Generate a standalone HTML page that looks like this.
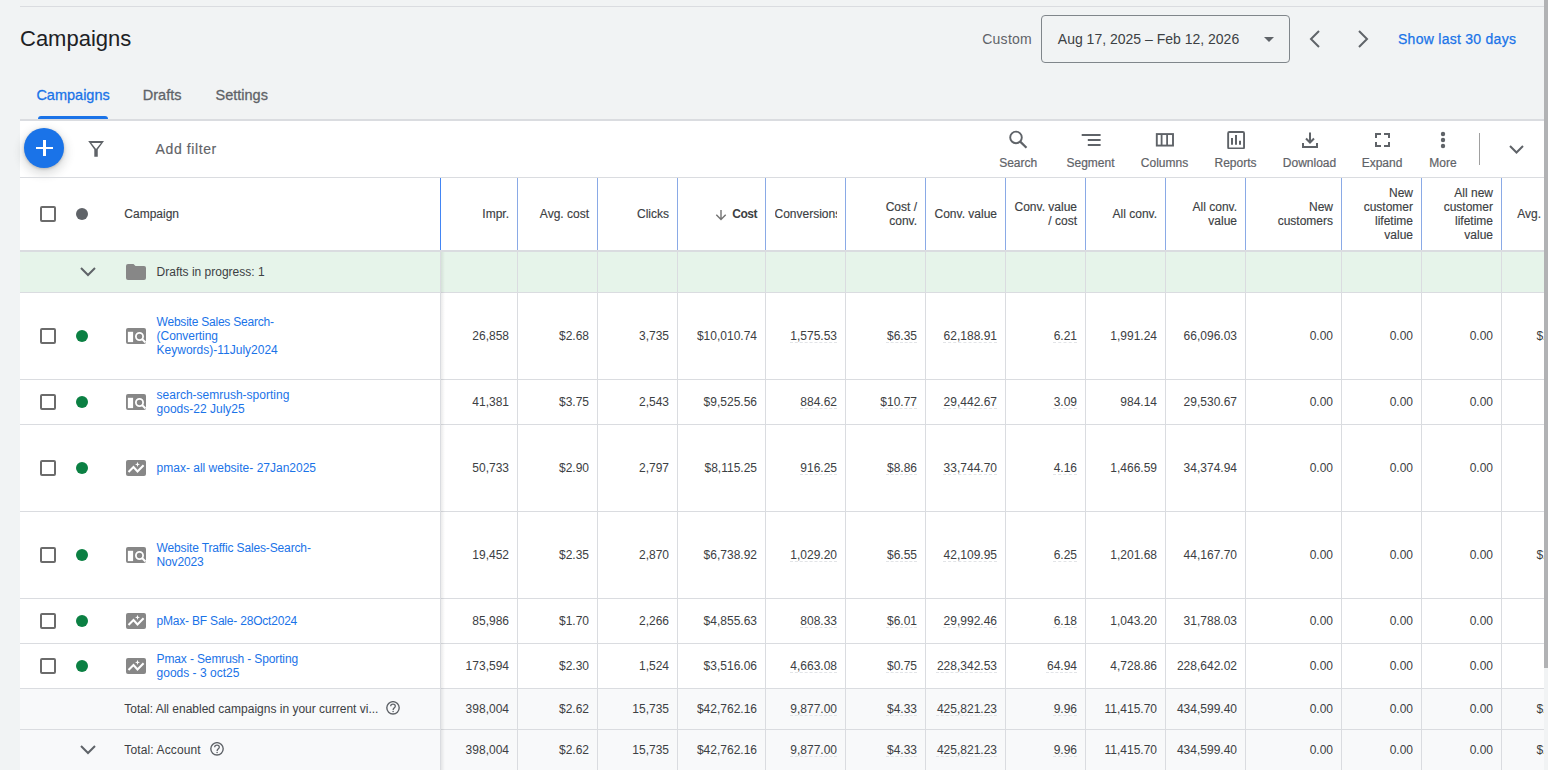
<!DOCTYPE html>
<html><head><meta charset="utf-8"><style>
html,body{margin:0;padding:0;}
body{width:1548px;height:770px;overflow:hidden;position:relative;background:#f1f3f4;font-family:"Liberation Sans", sans-serif;}
.t{position:absolute;white-space:nowrap;}
.r{position:absolute;}
</style></head><body>
<div class="r" style="left:20px;top:6px;width:1524px;height:1px;background:#dadce0"></div>
<div class="t" style="left:20.00px;top:28.18px;font-size:22px;line-height:22px;color:#202124;font-weight:normal;">Campaigns</div>
<div class="t" style="left:982.20px;top:31.75px;font-size:14px;line-height:14px;color:#5f6368;font-weight:normal;letter-spacing:0.27px">Custom</div>
<div class="r" style="left:1041px;top:15px;width:249px;height:48px;border:1px solid #80868b;border-radius:4px;box-sizing:border-box"></div>
<div class="t" style="left:1057.80px;top:31.75px;font-size:14px;line-height:14px;color:#3c4043;font-weight:normal;">Aug 17, 2025 – Feb 12, 2026</div>
<svg class="r" style="left:1264px;top:37px" width="10" height="5" viewBox="0 0 10 5"><path d="M0 0L10 0L5 5Z" fill="#5f6368"/></svg>
<svg class="r" style="left:1305px;top:29px" width="18" height="20" viewBox="0 0 18 20"><path d="M14 2L6 10L14 18" fill="none" stroke="#5f6368" stroke-width="2"/></svg>
<svg class="r" style="left:1354.5px;top:29px" width="18" height="20" viewBox="0 0 18 20"><path d="M4 2L12 10L4 18" fill="none" stroke="#5f6368" stroke-width="2"/></svg>
<div class="t" style="left:1398.00px;top:32.15px;font-size:14px;line-height:14px;color:#1a73e8;font-weight:normal;letter-spacing:0.27px;-webkit-text-stroke:0.25px #1a73e8">Show last 30 days</div>
<div class="t" style="left:36.40px;top:88.13px;font-size:14.5px;line-height:14.5px;color:#1a73e8;font-weight:normal;-webkit-text-stroke:0.3px #1a73e8">Campaigns</div>
<div class="t" style="left:142.80px;top:88.13px;font-size:14.5px;line-height:14.5px;color:#5f6368;font-weight:normal;-webkit-text-stroke:0.3px #5f6368">Drafts</div>
<div class="t" style="left:215.50px;top:88.13px;font-size:14.5px;line-height:14.5px;color:#5f6368;font-weight:normal;-webkit-text-stroke:0.3px #5f6368">Settings</div>
<div class="r" style="left:38px;top:116px;width:70px;height:3px;background:#1a73e8;border-radius:3px 3px 0 0"></div>
<div class="r" style="left:20px;top:119px;width:1524px;height:2px;background:#dadce0"></div>
<div class="r" style="left:20px;top:121px;width:1524px;height:649px;background:#fff"></div>
<div class="r" style="left:24px;top:128px;width:40px;height:40px;border-radius:50%;background:#1a73e8;box-shadow:0 1px 3px rgba(60,64,67,.3),0 4px 8px 3px rgba(60,64,67,.15)"></div>
<div class="r" style="left:36px;top:146.6px;width:17px;height:2.4px;background:#fff"></div>
<div class="r" style="left:43.2px;top:140px;width:2.4px;height:16px;background:#fff"></div>
<svg class="r" style="left:88px;top:141px" width="17" height="16" viewBox="0 0 17 16"><path fill-rule="evenodd" d="M0.2 0H16L9.75 8.5V15.8H6.3V8.5ZM3.3 2H12.9L8.1 7.9Z" fill="#5f6368"/></svg>
<div class="t" style="left:155.60px;top:141.95px;font-size:14px;line-height:14px;color:#5f6368;font-weight:normal;letter-spacing:0.6px;-webkit-text-stroke:0.15px #5f6368">Add filter</div>
<div class="r" style="left:20px;top:177px;width:1524px;height:1px;background:#dadce0"></div>
<div class="t" style="left:978.2px;width:80px;top:156.84px;font-size:12px;line-height:12px;color:#5f6368;text-align:center;-webkit-text-stroke:0.2px #5f6368">Search</div>
<div class="t" style="left:1050.5px;width:80px;top:156.84px;font-size:12px;line-height:12px;color:#5f6368;text-align:center;-webkit-text-stroke:0.2px #5f6368">Segment</div>
<div class="t" style="left:1124.5px;width:80px;top:156.84px;font-size:12px;line-height:12px;color:#5f6368;text-align:center;-webkit-text-stroke:0.2px #5f6368">Columns</div>
<div class="t" style="left:1195.5px;width:80px;top:156.84px;font-size:12px;line-height:12px;color:#5f6368;text-align:center;-webkit-text-stroke:0.2px #5f6368">Reports</div>
<div class="t" style="left:1269.5px;width:80px;top:156.84px;font-size:12px;line-height:12px;color:#5f6368;text-align:center;-webkit-text-stroke:0.2px #5f6368">Download</div>
<div class="t" style="left:1342.0px;width:80px;top:156.84px;font-size:12px;line-height:12px;color:#5f6368;text-align:center;-webkit-text-stroke:0.2px #5f6368">Expand</div>
<div class="t" style="left:1402.9px;width:80px;top:156.84px;font-size:12px;line-height:12px;color:#5f6368;text-align:center;-webkit-text-stroke:0.2px #5f6368">More</div>
<svg class="r" style="left:1008px;top:130px" width="20" height="20" viewBox="0 0 20 20"><circle cx="8" cy="7.4" r="5.8" fill="none" stroke="#5f6368" stroke-width="1.9"/><path d="M12.2 11.6L18.5 17.8" stroke="#5f6368" stroke-width="2.2"/></svg>
<svg class="r" style="left:1081px;top:133px" width="20" height="14" viewBox="0 0 20 14"><path d="M0.7 2H19.6M6.8 7H19.6M6.8 12H19.6" stroke="#5f6368" stroke-width="2"/></svg>
<svg class="r" style="left:1155px;top:133px" width="20" height="14" viewBox="0 0 20 14"><rect x="1.8" y="1.07" width="16.2" height="11.5" fill="none" stroke="#5f6368" stroke-width="1.9"/><path d="M6.6 1V12.6M12.1 1V12.6" stroke="#5f6368" stroke-width="1.8"/></svg>
<svg class="r" style="left:1226px;top:131px" width="20" height="18" viewBox="0 0 20 18"><rect x="2.15" y="1.05" width="15.9" height="16.5" rx="1.2" fill="none" stroke="#5f6368" stroke-width="1.9"/><path d="M6 13.7V6.9M10 13.7V4M14 13.7V9.8" stroke="#5f6368" stroke-width="2"/></svg>
<svg class="r" style="left:1301px;top:131px" width="18" height="18" viewBox="0 0 18 18"><path d="M9 1.5V11M5 7.5L9 11.5L13 7.5" fill="none" stroke="#5f6368" stroke-width="2"/><path d="M2 12V16H16V12" fill="none" stroke="#5f6368" stroke-width="2"/></svg>
<svg class="r" style="left:1375px;top:133px" width="16" height="15" viewBox="0 0 16 15"><path d="M1 5V1H6M9 1H14V5M14 9V13H9M6 13H1V9" fill="none" stroke="#5f6368" stroke-width="2"/></svg>
<svg class="r" style="left:1439px;top:131px" width="8" height="18" viewBox="0 0 8 18"><circle cx="4" cy="3" r="2.2" fill="#5f6368"/><circle cx="4" cy="9" r="2.2" fill="#5f6368"/><circle cx="4" cy="15" r="2.2" fill="#5f6368"/></svg>
<div class="r" style="left:1479px;top:133px;width:1px;height:32px;background:#a0a0a0"></div>
<svg class="r" style="left:1507.5px;top:144px" width="17" height="12" viewBox="0 0 17 12"><path d="M2 2L8.5 8.5L15 2" fill="none" stroke="#5f6368" stroke-width="2"/></svg>
<div class="r" style="left:517px;top:178px;width:1px;height:72px;background:#8aaae6"></div>
<div class="r" style="left:597px;top:178px;width:1px;height:72px;background:#8aaae6"></div>
<div class="r" style="left:677px;top:178px;width:1px;height:72px;background:#8aaae6"></div>
<div class="r" style="left:765px;top:178px;width:1px;height:72px;background:#8aaae6"></div>
<div class="r" style="left:845px;top:178px;width:1px;height:72px;background:#8aaae6"></div>
<div class="r" style="left:925px;top:178px;width:1px;height:72px;background:#8aaae6"></div>
<div class="r" style="left:1005px;top:178px;width:1px;height:72px;background:#8aaae6"></div>
<div class="r" style="left:1085px;top:178px;width:1px;height:72px;background:#8aaae6"></div>
<div class="r" style="left:1165px;top:178px;width:1px;height:72px;background:#8aaae6"></div>
<div class="r" style="left:1245px;top:178px;width:1px;height:72px;background:#8aaae6"></div>
<div class="r" style="left:1341px;top:178px;width:1px;height:72px;background:#8aaae6"></div>
<div class="r" style="left:1421px;top:178px;width:1px;height:72px;background:#8aaae6"></div>
<div class="r" style="left:1501px;top:178px;width:1px;height:72px;background:#8aaae6"></div>
<div class="r" style="left:440px;top:178px;width:1px;height:72px;background:#4285f4"></div>
<div class="r" style="left:20px;top:250px;width:1524px;height:2px;background:#dadce0"></div>
<div class="r" style="left:40px;top:206px;width:16px;height:16px;border:2px solid #6b6b6b;border-radius:2px;box-sizing:border-box"></div>
<div class="r" style="left:76px;top:208px;width:12px;height:12px;border-radius:50%;background:#5f6368"></div>
<div class="t" style="left:124.30px;top:207.84px;font-size:12px;line-height:12px;color:#3c4043;font-weight:normal;-webkit-text-stroke:0.15px #3c4043">Campaign</div>
<div class="t" style="right:1039.00px;top:207.84px;font-size:12px;line-height:12px;color:#3c4043;font-weight:normal;text-align:right;-webkit-text-stroke:0.15px #3c4043">Impr.</div>
<div class="t" style="right:959.00px;top:207.84px;font-size:12px;line-height:12px;color:#3c4043;font-weight:normal;text-align:right;-webkit-text-stroke:0.15px #3c4043">Avg. cost</div>
<div class="t" style="right:879.00px;top:207.84px;font-size:12px;line-height:12px;color:#3c4043;font-weight:normal;text-align:right;-webkit-text-stroke:0.15px #3c4043">Clicks</div>
<div class="t" style="right:791.00px;top:207.84px;font-size:12px;line-height:12px;color:#3c4043;font-weight:bold;text-align:right;letter-spacing:-0.5px">Cost</div>
<svg class="r" style="left:715px;top:209px" width="12" height="12" viewBox="0 0 12 12"><path d="M6 1V10.5M1.3 5.8L6 10.5L10.7 5.8" fill="none" stroke="#737373" stroke-width="1.4"/></svg>
<div class="t" style="left:774.5px;top:207.84px;width:62.5px;overflow:hidden;font-size:12px;line-height:12px;color:#3c4043;-webkit-text-stroke:0.15px #3c4043">Conversions</div>
<div class="t" style="right:631.00px;top:200.84px;font-size:12px;line-height:12px;color:#3c4043;font-weight:normal;text-align:right;-webkit-text-stroke:0.15px #3c4043">Cost /</div>
<div class="t" style="right:631.00px;top:214.84px;font-size:12px;line-height:12px;color:#3c4043;font-weight:normal;text-align:right;-webkit-text-stroke:0.15px #3c4043">conv.</div>
<div class="t" style="right:551.00px;top:207.84px;font-size:12px;line-height:12px;color:#3c4043;font-weight:normal;text-align:right;-webkit-text-stroke:0.15px #3c4043">Conv. value</div>
<div class="t" style="right:471.00px;top:200.84px;font-size:12px;line-height:12px;color:#3c4043;font-weight:normal;text-align:right;-webkit-text-stroke:0.15px #3c4043">Conv. value</div>
<div class="t" style="right:471.00px;top:214.84px;font-size:12px;line-height:12px;color:#3c4043;font-weight:normal;text-align:right;-webkit-text-stroke:0.15px #3c4043">/ cost</div>
<div class="t" style="right:391.00px;top:207.84px;font-size:12px;line-height:12px;color:#3c4043;font-weight:normal;text-align:right;-webkit-text-stroke:0.15px #3c4043">All conv.</div>
<div class="t" style="right:311.00px;top:200.84px;font-size:12px;line-height:12px;color:#3c4043;font-weight:normal;text-align:right;-webkit-text-stroke:0.15px #3c4043">All conv.</div>
<div class="t" style="right:311.00px;top:214.84px;font-size:12px;line-height:12px;color:#3c4043;font-weight:normal;text-align:right;-webkit-text-stroke:0.15px #3c4043">value</div>
<div class="t" style="right:215.00px;top:200.84px;font-size:12px;line-height:12px;color:#3c4043;font-weight:normal;text-align:right;-webkit-text-stroke:0.15px #3c4043">New</div>
<div class="t" style="right:215.00px;top:214.84px;font-size:12px;line-height:12px;color:#3c4043;font-weight:normal;text-align:right;-webkit-text-stroke:0.15px #3c4043">customers</div>
<div class="t" style="right:135.00px;top:186.84px;font-size:12px;line-height:12px;color:#3c4043;font-weight:normal;text-align:right;-webkit-text-stroke:0.15px #3c4043">New</div>
<div class="t" style="right:135.00px;top:200.84px;font-size:12px;line-height:12px;color:#3c4043;font-weight:normal;text-align:right;-webkit-text-stroke:0.15px #3c4043">customer</div>
<div class="t" style="right:135.00px;top:214.84px;font-size:12px;line-height:12px;color:#3c4043;font-weight:normal;text-align:right;-webkit-text-stroke:0.15px #3c4043">lifetime</div>
<div class="t" style="right:135.00px;top:228.84px;font-size:12px;line-height:12px;color:#3c4043;font-weight:normal;text-align:right;-webkit-text-stroke:0.15px #3c4043">value</div>
<div class="t" style="right:55.00px;top:186.84px;font-size:12px;line-height:12px;color:#3c4043;font-weight:normal;text-align:right;-webkit-text-stroke:0.15px #3c4043">All new</div>
<div class="t" style="right:55.00px;top:200.84px;font-size:12px;line-height:12px;color:#3c4043;font-weight:normal;text-align:right;-webkit-text-stroke:0.15px #3c4043">customer</div>
<div class="t" style="right:55.00px;top:214.84px;font-size:12px;line-height:12px;color:#3c4043;font-weight:normal;text-align:right;-webkit-text-stroke:0.15px #3c4043">lifetime</div>
<div class="t" style="right:55.00px;top:228.84px;font-size:12px;line-height:12px;color:#3c4043;font-weight:normal;text-align:right;-webkit-text-stroke:0.15px #3c4043">value</div>
<div class="t" style="right:7.00px;top:207.84px;font-size:12px;line-height:12px;color:#3c4043;font-weight:normal;text-align:right;-webkit-text-stroke:0.15px #3c4043">Avg.</div>
<div class="r" style="left:20px;top:252px;width:1524px;height:40px;background:#e6f4ea"></div>
<div class="r" style="left:20px;top:292px;width:1524px;height:1px;background:#dadce0"></div>
<div class="r" style="left:517px;top:252px;width:1px;height:40px;background:#dadce0"></div>
<div class="r" style="left:597px;top:252px;width:1px;height:40px;background:#dadce0"></div>
<div class="r" style="left:677px;top:252px;width:1px;height:40px;background:#dadce0"></div>
<div class="r" style="left:765px;top:252px;width:1px;height:40px;background:#dadce0"></div>
<div class="r" style="left:845px;top:252px;width:1px;height:40px;background:#dadce0"></div>
<div class="r" style="left:925px;top:252px;width:1px;height:40px;background:#dadce0"></div>
<div class="r" style="left:1005px;top:252px;width:1px;height:40px;background:#dadce0"></div>
<div class="r" style="left:1085px;top:252px;width:1px;height:40px;background:#dadce0"></div>
<div class="r" style="left:1165px;top:252px;width:1px;height:40px;background:#dadce0"></div>
<div class="r" style="left:1245px;top:252px;width:1px;height:40px;background:#dadce0"></div>
<div class="r" style="left:1341px;top:252px;width:1px;height:40px;background:#dadce0"></div>
<div class="r" style="left:1421px;top:252px;width:1px;height:40px;background:#dadce0"></div>
<div class="r" style="left:1501px;top:252px;width:1px;height:40px;background:#dadce0"></div>
<svg class="r" style="left:79.3px;top:266px" width="18" height="12" viewBox="0 0 18 12"><path d="M2 2L9 9L16 2" fill="none" stroke="#5f6368" stroke-width="2"/></svg>
<svg class="r" style="left:126px;top:264px" width="20" height="16" viewBox="0 0 20 16"><path d="M0 2Q0 0 2 0H7.5L9.5 2H18Q20 2 20 4V14Q20 16 18 16H2Q0 16 0 14Z" fill="#878787"/></svg>
<div class="t" style="left:156.60px;top:265.84px;font-size:12px;line-height:12px;color:#3c4043;font-weight:normal;">Drafts in progress: 1</div>
<div class="r" style="left:40px;top:328.0px;width:16px;height:16px;border:2px solid #6b6b6b;border-radius:2px;box-sizing:border-box"></div>
<div class="r" style="left:76px;top:330.0px;width:12px;height:12px;border-radius:50%;background:#0b8043"></div>
<svg class="r" style="left:126px;top:328px" width="20" height="16" viewBox="0 0 20 16"><rect x="0" y="0" width="20" height="16" rx="2" fill="#878787"/><rect x="1.9" y="3.8" width="5.2" height="10.3" fill="#fff"/><circle cx="13.5" cy="8.5" r="3.6" fill="none" stroke="#fff" stroke-width="1.8"/><path d="M15.8 10.8L19.5 14.5" stroke="#fff" stroke-width="2"/></svg>
<div class="t" style="left:156.60px;top:315.84px;font-size:12px;line-height:12px;color:#1a73e8;font-weight:normal;letter-spacing:-0.227px">Website Sales Search-</div>
<div class="t" style="left:156.60px;top:329.84px;font-size:12px;line-height:12px;color:#1a73e8;font-weight:normal;letter-spacing:-0.063px">(Converting</div>
<div class="t" style="left:156.60px;top:343.84px;font-size:12px;line-height:12px;color:#1a73e8;font-weight:normal;">Keywords)-11July2024</div>
<div class="t" style="right:1039.00px;top:330.04px;font-size:12px;line-height:12px;color:#3c4043;font-weight:normal;text-align:right;">26,858</div>
<div class="t" style="right:959.00px;top:330.04px;font-size:12px;line-height:12px;color:#3c4043;font-weight:normal;text-align:right;">$2.68</div>
<div class="t" style="right:879.00px;top:330.04px;font-size:12px;line-height:12px;color:#3c4043;font-weight:normal;text-align:right;">3,735</div>
<div class="t" style="right:791.00px;top:330.04px;font-size:12px;line-height:12px;color:#3c4043;font-weight:normal;text-align:right;">$10,010.74</div>
<div class="t" style="right:711.00px;top:330.04px;font-size:12px;line-height:12px;color:#3c4043;font-weight:normal;text-align:right;text-decoration:underline dashed #e2e4e7;text-underline-offset:2px;text-decoration-thickness:1px">1,575.53</div>
<div class="t" style="right:631.00px;top:330.04px;font-size:12px;line-height:12px;color:#3c4043;font-weight:normal;text-align:right;text-decoration:underline dashed #e2e4e7;text-underline-offset:2px;text-decoration-thickness:1px">$6.35</div>
<div class="t" style="right:551.00px;top:330.04px;font-size:12px;line-height:12px;color:#3c4043;font-weight:normal;text-align:right;text-decoration:underline dashed #e2e4e7;text-underline-offset:2px;text-decoration-thickness:1px">62,188.91</div>
<div class="t" style="right:471.00px;top:330.04px;font-size:12px;line-height:12px;color:#3c4043;font-weight:normal;text-align:right;text-decoration:underline dashed #e2e4e7;text-underline-offset:2px;text-decoration-thickness:1px">6.21</div>
<div class="t" style="right:391.00px;top:330.04px;font-size:12px;line-height:12px;color:#3c4043;font-weight:normal;text-align:right;">1,991.24</div>
<div class="t" style="right:311.00px;top:330.04px;font-size:12px;line-height:12px;color:#3c4043;font-weight:normal;text-align:right;">66,096.03</div>
<div class="t" style="right:215.00px;top:330.04px;font-size:12px;line-height:12px;color:#3c4043;font-weight:normal;text-align:right;">0.00</div>
<div class="t" style="right:135.00px;top:330.04px;font-size:12px;line-height:12px;color:#3c4043;font-weight:normal;text-align:right;">0.00</div>
<div class="t" style="right:55.00px;top:330.04px;font-size:12px;line-height:12px;color:#3c4043;font-weight:normal;text-align:right;">0.00</div>
<div class="t" style="left:1536.6px;top:330.04px;font-size:12px;line-height:12px;color:#3c4043">$2.5</div>
<div class="r" style="left:20px;top:379px;width:1524px;height:1px;background:#dadce0"></div>
<div class="r" style="left:517px;top:293px;width:1px;height:86px;background:#dadce0"></div>
<div class="r" style="left:597px;top:293px;width:1px;height:86px;background:#dadce0"></div>
<div class="r" style="left:677px;top:293px;width:1px;height:86px;background:#dadce0"></div>
<div class="r" style="left:765px;top:293px;width:1px;height:86px;background:#dadce0"></div>
<div class="r" style="left:845px;top:293px;width:1px;height:86px;background:#dadce0"></div>
<div class="r" style="left:925px;top:293px;width:1px;height:86px;background:#dadce0"></div>
<div class="r" style="left:1005px;top:293px;width:1px;height:86px;background:#dadce0"></div>
<div class="r" style="left:1085px;top:293px;width:1px;height:86px;background:#dadce0"></div>
<div class="r" style="left:1165px;top:293px;width:1px;height:86px;background:#dadce0"></div>
<div class="r" style="left:1245px;top:293px;width:1px;height:86px;background:#dadce0"></div>
<div class="r" style="left:1341px;top:293px;width:1px;height:86px;background:#dadce0"></div>
<div class="r" style="left:1421px;top:293px;width:1px;height:86px;background:#dadce0"></div>
<div class="r" style="left:1501px;top:293px;width:1px;height:86px;background:#dadce0"></div>
<div class="r" style="left:40px;top:394.0px;width:16px;height:16px;border:2px solid #6b6b6b;border-radius:2px;box-sizing:border-box"></div>
<div class="r" style="left:76px;top:396.0px;width:12px;height:12px;border-radius:50%;background:#0b8043"></div>
<svg class="r" style="left:126px;top:394px" width="20" height="16" viewBox="0 0 20 16"><rect x="0" y="0" width="20" height="16" rx="2" fill="#878787"/><rect x="1.9" y="3.8" width="5.2" height="10.3" fill="#fff"/><circle cx="13.5" cy="8.5" r="3.6" fill="none" stroke="#fff" stroke-width="1.8"/><path d="M15.8 10.8L19.5 14.5" stroke="#fff" stroke-width="2"/></svg>
<div class="t" style="left:156.60px;top:388.84px;font-size:12px;line-height:12px;color:#1a73e8;font-weight:normal;">search-semrush-sporting</div>
<div class="t" style="left:156.60px;top:402.84px;font-size:12px;line-height:12px;color:#1a73e8;font-weight:normal;">goods-22 July25</div>
<div class="t" style="right:1039.00px;top:396.04px;font-size:12px;line-height:12px;color:#3c4043;font-weight:normal;text-align:right;">41,381</div>
<div class="t" style="right:959.00px;top:396.04px;font-size:12px;line-height:12px;color:#3c4043;font-weight:normal;text-align:right;">$3.75</div>
<div class="t" style="right:879.00px;top:396.04px;font-size:12px;line-height:12px;color:#3c4043;font-weight:normal;text-align:right;">2,543</div>
<div class="t" style="right:791.00px;top:396.04px;font-size:12px;line-height:12px;color:#3c4043;font-weight:normal;text-align:right;">$9,525.56</div>
<div class="t" style="right:711.00px;top:396.04px;font-size:12px;line-height:12px;color:#3c4043;font-weight:normal;text-align:right;text-decoration:underline dashed #e2e4e7;text-underline-offset:2px;text-decoration-thickness:1px">884.62</div>
<div class="t" style="right:631.00px;top:396.04px;font-size:12px;line-height:12px;color:#3c4043;font-weight:normal;text-align:right;text-decoration:underline dashed #e2e4e7;text-underline-offset:2px;text-decoration-thickness:1px">$10.77</div>
<div class="t" style="right:551.00px;top:396.04px;font-size:12px;line-height:12px;color:#3c4043;font-weight:normal;text-align:right;text-decoration:underline dashed #e2e4e7;text-underline-offset:2px;text-decoration-thickness:1px">29,442.67</div>
<div class="t" style="right:471.00px;top:396.04px;font-size:12px;line-height:12px;color:#3c4043;font-weight:normal;text-align:right;text-decoration:underline dashed #e2e4e7;text-underline-offset:2px;text-decoration-thickness:1px">3.09</div>
<div class="t" style="right:391.00px;top:396.04px;font-size:12px;line-height:12px;color:#3c4043;font-weight:normal;text-align:right;">984.14</div>
<div class="t" style="right:311.00px;top:396.04px;font-size:12px;line-height:12px;color:#3c4043;font-weight:normal;text-align:right;">29,530.67</div>
<div class="t" style="right:215.00px;top:396.04px;font-size:12px;line-height:12px;color:#3c4043;font-weight:normal;text-align:right;">0.00</div>
<div class="t" style="right:135.00px;top:396.04px;font-size:12px;line-height:12px;color:#3c4043;font-weight:normal;text-align:right;">0.00</div>
<div class="t" style="right:55.00px;top:396.04px;font-size:12px;line-height:12px;color:#3c4043;font-weight:normal;text-align:right;">0.00</div>
<div class="r" style="left:20px;top:424px;width:1524px;height:1px;background:#dadce0"></div>
<div class="r" style="left:517px;top:380px;width:1px;height:44px;background:#dadce0"></div>
<div class="r" style="left:597px;top:380px;width:1px;height:44px;background:#dadce0"></div>
<div class="r" style="left:677px;top:380px;width:1px;height:44px;background:#dadce0"></div>
<div class="r" style="left:765px;top:380px;width:1px;height:44px;background:#dadce0"></div>
<div class="r" style="left:845px;top:380px;width:1px;height:44px;background:#dadce0"></div>
<div class="r" style="left:925px;top:380px;width:1px;height:44px;background:#dadce0"></div>
<div class="r" style="left:1005px;top:380px;width:1px;height:44px;background:#dadce0"></div>
<div class="r" style="left:1085px;top:380px;width:1px;height:44px;background:#dadce0"></div>
<div class="r" style="left:1165px;top:380px;width:1px;height:44px;background:#dadce0"></div>
<div class="r" style="left:1245px;top:380px;width:1px;height:44px;background:#dadce0"></div>
<div class="r" style="left:1341px;top:380px;width:1px;height:44px;background:#dadce0"></div>
<div class="r" style="left:1421px;top:380px;width:1px;height:44px;background:#dadce0"></div>
<div class="r" style="left:1501px;top:380px;width:1px;height:44px;background:#dadce0"></div>
<div class="r" style="left:40px;top:460.0px;width:16px;height:16px;border:2px solid #6b6b6b;border-radius:2px;box-sizing:border-box"></div>
<div class="r" style="left:76px;top:462.0px;width:12px;height:12px;border-radius:50%;background:#0b8043"></div>
<svg class="r" style="left:126px;top:460px" width="20" height="16" viewBox="0 0 20 16"><rect x="0" y="0" width="20" height="16" rx="2" fill="#878787"/><path d="M2.5 12L7.5 7.1L11.5 11.4L17.6 5.3" fill="none" stroke="#fff" stroke-width="2.1"/><path d="M11.5 1.8L12.2 3.7L14 4.4L12.2 5.1L11.5 7L10.8 5.1L9 4.4L10.8 3.7Z" fill="#fff"/></svg>
<div class="t" style="left:156.60px;top:461.84px;font-size:12px;line-height:12px;color:#1a73e8;font-weight:normal;">pmax- all website- 27Jan2025</div>
<div class="t" style="right:1039.00px;top:462.04px;font-size:12px;line-height:12px;color:#3c4043;font-weight:normal;text-align:right;">50,733</div>
<div class="t" style="right:959.00px;top:462.04px;font-size:12px;line-height:12px;color:#3c4043;font-weight:normal;text-align:right;">$2.90</div>
<div class="t" style="right:879.00px;top:462.04px;font-size:12px;line-height:12px;color:#3c4043;font-weight:normal;text-align:right;">2,797</div>
<div class="t" style="right:791.00px;top:462.04px;font-size:12px;line-height:12px;color:#3c4043;font-weight:normal;text-align:right;">$8,115.25</div>
<div class="t" style="right:711.00px;top:462.04px;font-size:12px;line-height:12px;color:#3c4043;font-weight:normal;text-align:right;text-decoration:underline dashed #e2e4e7;text-underline-offset:2px;text-decoration-thickness:1px">916.25</div>
<div class="t" style="right:631.00px;top:462.04px;font-size:12px;line-height:12px;color:#3c4043;font-weight:normal;text-align:right;text-decoration:underline dashed #e2e4e7;text-underline-offset:2px;text-decoration-thickness:1px">$8.86</div>
<div class="t" style="right:551.00px;top:462.04px;font-size:12px;line-height:12px;color:#3c4043;font-weight:normal;text-align:right;text-decoration:underline dashed #e2e4e7;text-underline-offset:2px;text-decoration-thickness:1px">33,744.70</div>
<div class="t" style="right:471.00px;top:462.04px;font-size:12px;line-height:12px;color:#3c4043;font-weight:normal;text-align:right;text-decoration:underline dashed #e2e4e7;text-underline-offset:2px;text-decoration-thickness:1px">4.16</div>
<div class="t" style="right:391.00px;top:462.04px;font-size:12px;line-height:12px;color:#3c4043;font-weight:normal;text-align:right;">1,466.59</div>
<div class="t" style="right:311.00px;top:462.04px;font-size:12px;line-height:12px;color:#3c4043;font-weight:normal;text-align:right;">34,374.94</div>
<div class="t" style="right:215.00px;top:462.04px;font-size:12px;line-height:12px;color:#3c4043;font-weight:normal;text-align:right;">0.00</div>
<div class="t" style="right:135.00px;top:462.04px;font-size:12px;line-height:12px;color:#3c4043;font-weight:normal;text-align:right;">0.00</div>
<div class="t" style="right:55.00px;top:462.04px;font-size:12px;line-height:12px;color:#3c4043;font-weight:normal;text-align:right;">0.00</div>
<div class="r" style="left:20px;top:511px;width:1524px;height:1px;background:#dadce0"></div>
<div class="r" style="left:517px;top:425px;width:1px;height:86px;background:#dadce0"></div>
<div class="r" style="left:597px;top:425px;width:1px;height:86px;background:#dadce0"></div>
<div class="r" style="left:677px;top:425px;width:1px;height:86px;background:#dadce0"></div>
<div class="r" style="left:765px;top:425px;width:1px;height:86px;background:#dadce0"></div>
<div class="r" style="left:845px;top:425px;width:1px;height:86px;background:#dadce0"></div>
<div class="r" style="left:925px;top:425px;width:1px;height:86px;background:#dadce0"></div>
<div class="r" style="left:1005px;top:425px;width:1px;height:86px;background:#dadce0"></div>
<div class="r" style="left:1085px;top:425px;width:1px;height:86px;background:#dadce0"></div>
<div class="r" style="left:1165px;top:425px;width:1px;height:86px;background:#dadce0"></div>
<div class="r" style="left:1245px;top:425px;width:1px;height:86px;background:#dadce0"></div>
<div class="r" style="left:1341px;top:425px;width:1px;height:86px;background:#dadce0"></div>
<div class="r" style="left:1421px;top:425px;width:1px;height:86px;background:#dadce0"></div>
<div class="r" style="left:1501px;top:425px;width:1px;height:86px;background:#dadce0"></div>
<div class="r" style="left:40px;top:547.0px;width:16px;height:16px;border:2px solid #6b6b6b;border-radius:2px;box-sizing:border-box"></div>
<div class="r" style="left:76px;top:549.0px;width:12px;height:12px;border-radius:50%;background:#0b8043"></div>
<svg class="r" style="left:126px;top:547px" width="20" height="16" viewBox="0 0 20 16"><rect x="0" y="0" width="20" height="16" rx="2" fill="#878787"/><rect x="1.9" y="3.8" width="5.2" height="10.3" fill="#fff"/><circle cx="13.5" cy="8.5" r="3.6" fill="none" stroke="#fff" stroke-width="1.8"/><path d="M15.8 10.8L19.5 14.5" stroke="#fff" stroke-width="2"/></svg>
<div class="t" style="left:156.60px;top:541.84px;font-size:12px;line-height:12px;color:#1a73e8;font-weight:normal;letter-spacing:-0.143px">Website Traffic Sales-Search-</div>
<div class="t" style="left:156.60px;top:555.84px;font-size:12px;line-height:12px;color:#1a73e8;font-weight:normal;letter-spacing:-0.174px">Nov2023</div>
<div class="t" style="right:1039.00px;top:549.04px;font-size:12px;line-height:12px;color:#3c4043;font-weight:normal;text-align:right;">19,452</div>
<div class="t" style="right:959.00px;top:549.04px;font-size:12px;line-height:12px;color:#3c4043;font-weight:normal;text-align:right;">$2.35</div>
<div class="t" style="right:879.00px;top:549.04px;font-size:12px;line-height:12px;color:#3c4043;font-weight:normal;text-align:right;">2,870</div>
<div class="t" style="right:791.00px;top:549.04px;font-size:12px;line-height:12px;color:#3c4043;font-weight:normal;text-align:right;">$6,738.92</div>
<div class="t" style="right:711.00px;top:549.04px;font-size:12px;line-height:12px;color:#3c4043;font-weight:normal;text-align:right;text-decoration:underline dashed #e2e4e7;text-underline-offset:2px;text-decoration-thickness:1px">1,029.20</div>
<div class="t" style="right:631.00px;top:549.04px;font-size:12px;line-height:12px;color:#3c4043;font-weight:normal;text-align:right;text-decoration:underline dashed #e2e4e7;text-underline-offset:2px;text-decoration-thickness:1px">$6.55</div>
<div class="t" style="right:551.00px;top:549.04px;font-size:12px;line-height:12px;color:#3c4043;font-weight:normal;text-align:right;text-decoration:underline dashed #e2e4e7;text-underline-offset:2px;text-decoration-thickness:1px">42,109.95</div>
<div class="t" style="right:471.00px;top:549.04px;font-size:12px;line-height:12px;color:#3c4043;font-weight:normal;text-align:right;text-decoration:underline dashed #e2e4e7;text-underline-offset:2px;text-decoration-thickness:1px">6.25</div>
<div class="t" style="right:391.00px;top:549.04px;font-size:12px;line-height:12px;color:#3c4043;font-weight:normal;text-align:right;">1,201.68</div>
<div class="t" style="right:311.00px;top:549.04px;font-size:12px;line-height:12px;color:#3c4043;font-weight:normal;text-align:right;">44,167.70</div>
<div class="t" style="right:215.00px;top:549.04px;font-size:12px;line-height:12px;color:#3c4043;font-weight:normal;text-align:right;">0.00</div>
<div class="t" style="right:135.00px;top:549.04px;font-size:12px;line-height:12px;color:#3c4043;font-weight:normal;text-align:right;">0.00</div>
<div class="t" style="right:55.00px;top:549.04px;font-size:12px;line-height:12px;color:#3c4043;font-weight:normal;text-align:right;">0.00</div>
<div class="t" style="left:1536.6px;top:549.04px;font-size:12px;line-height:12px;color:#3c4043">$2.5</div>
<div class="r" style="left:20px;top:598px;width:1524px;height:1px;background:#dadce0"></div>
<div class="r" style="left:517px;top:512px;width:1px;height:86px;background:#dadce0"></div>
<div class="r" style="left:597px;top:512px;width:1px;height:86px;background:#dadce0"></div>
<div class="r" style="left:677px;top:512px;width:1px;height:86px;background:#dadce0"></div>
<div class="r" style="left:765px;top:512px;width:1px;height:86px;background:#dadce0"></div>
<div class="r" style="left:845px;top:512px;width:1px;height:86px;background:#dadce0"></div>
<div class="r" style="left:925px;top:512px;width:1px;height:86px;background:#dadce0"></div>
<div class="r" style="left:1005px;top:512px;width:1px;height:86px;background:#dadce0"></div>
<div class="r" style="left:1085px;top:512px;width:1px;height:86px;background:#dadce0"></div>
<div class="r" style="left:1165px;top:512px;width:1px;height:86px;background:#dadce0"></div>
<div class="r" style="left:1245px;top:512px;width:1px;height:86px;background:#dadce0"></div>
<div class="r" style="left:1341px;top:512px;width:1px;height:86px;background:#dadce0"></div>
<div class="r" style="left:1421px;top:512px;width:1px;height:86px;background:#dadce0"></div>
<div class="r" style="left:1501px;top:512px;width:1px;height:86px;background:#dadce0"></div>
<div class="r" style="left:40px;top:613.0px;width:16px;height:16px;border:2px solid #6b6b6b;border-radius:2px;box-sizing:border-box"></div>
<div class="r" style="left:76px;top:615.0px;width:12px;height:12px;border-radius:50%;background:#0b8043"></div>
<svg class="r" style="left:126px;top:613px" width="20" height="16" viewBox="0 0 20 16"><rect x="0" y="0" width="20" height="16" rx="2" fill="#878787"/><path d="M2.5 12L7.5 7.1L11.5 11.4L17.6 5.3" fill="none" stroke="#fff" stroke-width="2.1"/><path d="M11.5 1.8L12.2 3.7L14 4.4L12.2 5.1L11.5 7L10.8 5.1L9 4.4L10.8 3.7Z" fill="#fff"/></svg>
<div class="t" style="left:156.60px;top:614.84px;font-size:12px;line-height:12px;color:#1a73e8;font-weight:normal;letter-spacing:-0.205px">pMax- BF Sale- 28Oct2024</div>
<div class="t" style="right:1039.00px;top:615.04px;font-size:12px;line-height:12px;color:#3c4043;font-weight:normal;text-align:right;">85,986</div>
<div class="t" style="right:959.00px;top:615.04px;font-size:12px;line-height:12px;color:#3c4043;font-weight:normal;text-align:right;">$1.70</div>
<div class="t" style="right:879.00px;top:615.04px;font-size:12px;line-height:12px;color:#3c4043;font-weight:normal;text-align:right;">2,266</div>
<div class="t" style="right:791.00px;top:615.04px;font-size:12px;line-height:12px;color:#3c4043;font-weight:normal;text-align:right;">$4,855.63</div>
<div class="t" style="right:711.00px;top:615.04px;font-size:12px;line-height:12px;color:#3c4043;font-weight:normal;text-align:right;text-decoration:underline dashed #e2e4e7;text-underline-offset:2px;text-decoration-thickness:1px">808.33</div>
<div class="t" style="right:631.00px;top:615.04px;font-size:12px;line-height:12px;color:#3c4043;font-weight:normal;text-align:right;text-decoration:underline dashed #e2e4e7;text-underline-offset:2px;text-decoration-thickness:1px">$6.01</div>
<div class="t" style="right:551.00px;top:615.04px;font-size:12px;line-height:12px;color:#3c4043;font-weight:normal;text-align:right;text-decoration:underline dashed #e2e4e7;text-underline-offset:2px;text-decoration-thickness:1px">29,992.46</div>
<div class="t" style="right:471.00px;top:615.04px;font-size:12px;line-height:12px;color:#3c4043;font-weight:normal;text-align:right;text-decoration:underline dashed #e2e4e7;text-underline-offset:2px;text-decoration-thickness:1px">6.18</div>
<div class="t" style="right:391.00px;top:615.04px;font-size:12px;line-height:12px;color:#3c4043;font-weight:normal;text-align:right;">1,043.20</div>
<div class="t" style="right:311.00px;top:615.04px;font-size:12px;line-height:12px;color:#3c4043;font-weight:normal;text-align:right;">31,788.03</div>
<div class="t" style="right:215.00px;top:615.04px;font-size:12px;line-height:12px;color:#3c4043;font-weight:normal;text-align:right;">0.00</div>
<div class="t" style="right:135.00px;top:615.04px;font-size:12px;line-height:12px;color:#3c4043;font-weight:normal;text-align:right;">0.00</div>
<div class="t" style="right:55.00px;top:615.04px;font-size:12px;line-height:12px;color:#3c4043;font-weight:normal;text-align:right;">0.00</div>
<div class="r" style="left:20px;top:643px;width:1524px;height:1px;background:#dadce0"></div>
<div class="r" style="left:517px;top:599px;width:1px;height:44px;background:#dadce0"></div>
<div class="r" style="left:597px;top:599px;width:1px;height:44px;background:#dadce0"></div>
<div class="r" style="left:677px;top:599px;width:1px;height:44px;background:#dadce0"></div>
<div class="r" style="left:765px;top:599px;width:1px;height:44px;background:#dadce0"></div>
<div class="r" style="left:845px;top:599px;width:1px;height:44px;background:#dadce0"></div>
<div class="r" style="left:925px;top:599px;width:1px;height:44px;background:#dadce0"></div>
<div class="r" style="left:1005px;top:599px;width:1px;height:44px;background:#dadce0"></div>
<div class="r" style="left:1085px;top:599px;width:1px;height:44px;background:#dadce0"></div>
<div class="r" style="left:1165px;top:599px;width:1px;height:44px;background:#dadce0"></div>
<div class="r" style="left:1245px;top:599px;width:1px;height:44px;background:#dadce0"></div>
<div class="r" style="left:1341px;top:599px;width:1px;height:44px;background:#dadce0"></div>
<div class="r" style="left:1421px;top:599px;width:1px;height:44px;background:#dadce0"></div>
<div class="r" style="left:1501px;top:599px;width:1px;height:44px;background:#dadce0"></div>
<div class="r" style="left:40px;top:658.0px;width:16px;height:16px;border:2px solid #6b6b6b;border-radius:2px;box-sizing:border-box"></div>
<div class="r" style="left:76px;top:660.0px;width:12px;height:12px;border-radius:50%;background:#0b8043"></div>
<svg class="r" style="left:126px;top:658px" width="20" height="16" viewBox="0 0 20 16"><rect x="0" y="0" width="20" height="16" rx="2" fill="#878787"/><path d="M2.5 12L7.5 7.1L11.5 11.4L17.6 5.3" fill="none" stroke="#fff" stroke-width="2.1"/><path d="M11.5 1.8L12.2 3.7L14 4.4L12.2 5.1L11.5 7L10.8 5.1L9 4.4L10.8 3.7Z" fill="#fff"/></svg>
<div class="t" style="left:156.60px;top:652.84px;font-size:12px;line-height:12px;color:#1a73e8;font-weight:normal;letter-spacing:-0.134px">Pmax - Semrush - Sporting</div>
<div class="t" style="left:156.60px;top:666.84px;font-size:12px;line-height:12px;color:#1a73e8;font-weight:normal;">goods - 3 oct25</div>
<div class="t" style="right:1039.00px;top:660.04px;font-size:12px;line-height:12px;color:#3c4043;font-weight:normal;text-align:right;">173,594</div>
<div class="t" style="right:959.00px;top:660.04px;font-size:12px;line-height:12px;color:#3c4043;font-weight:normal;text-align:right;">$2.30</div>
<div class="t" style="right:879.00px;top:660.04px;font-size:12px;line-height:12px;color:#3c4043;font-weight:normal;text-align:right;">1,524</div>
<div class="t" style="right:791.00px;top:660.04px;font-size:12px;line-height:12px;color:#3c4043;font-weight:normal;text-align:right;">$3,516.06</div>
<div class="t" style="right:711.00px;top:660.04px;font-size:12px;line-height:12px;color:#3c4043;font-weight:normal;text-align:right;text-decoration:underline dashed #e2e4e7;text-underline-offset:2px;text-decoration-thickness:1px">4,663.08</div>
<div class="t" style="right:631.00px;top:660.04px;font-size:12px;line-height:12px;color:#3c4043;font-weight:normal;text-align:right;text-decoration:underline dashed #e2e4e7;text-underline-offset:2px;text-decoration-thickness:1px">$0.75</div>
<div class="t" style="right:551.00px;top:660.04px;font-size:12px;line-height:12px;color:#3c4043;font-weight:normal;text-align:right;text-decoration:underline dashed #e2e4e7;text-underline-offset:2px;text-decoration-thickness:1px">228,342.53</div>
<div class="t" style="right:471.00px;top:660.04px;font-size:12px;line-height:12px;color:#3c4043;font-weight:normal;text-align:right;text-decoration:underline dashed #e2e4e7;text-underline-offset:2px;text-decoration-thickness:1px">64.94</div>
<div class="t" style="right:391.00px;top:660.04px;font-size:12px;line-height:12px;color:#3c4043;font-weight:normal;text-align:right;">4,728.86</div>
<div class="t" style="right:311.00px;top:660.04px;font-size:12px;line-height:12px;color:#3c4043;font-weight:normal;text-align:right;">228,642.02</div>
<div class="t" style="right:215.00px;top:660.04px;font-size:12px;line-height:12px;color:#3c4043;font-weight:normal;text-align:right;">0.00</div>
<div class="t" style="right:135.00px;top:660.04px;font-size:12px;line-height:12px;color:#3c4043;font-weight:normal;text-align:right;">0.00</div>
<div class="t" style="right:55.00px;top:660.04px;font-size:12px;line-height:12px;color:#3c4043;font-weight:normal;text-align:right;">0.00</div>
<div class="r" style="left:20px;top:688px;width:1524px;height:1px;background:#dadce0"></div>
<div class="r" style="left:517px;top:644px;width:1px;height:44px;background:#dadce0"></div>
<div class="r" style="left:597px;top:644px;width:1px;height:44px;background:#dadce0"></div>
<div class="r" style="left:677px;top:644px;width:1px;height:44px;background:#dadce0"></div>
<div class="r" style="left:765px;top:644px;width:1px;height:44px;background:#dadce0"></div>
<div class="r" style="left:845px;top:644px;width:1px;height:44px;background:#dadce0"></div>
<div class="r" style="left:925px;top:644px;width:1px;height:44px;background:#dadce0"></div>
<div class="r" style="left:1005px;top:644px;width:1px;height:44px;background:#dadce0"></div>
<div class="r" style="left:1085px;top:644px;width:1px;height:44px;background:#dadce0"></div>
<div class="r" style="left:1165px;top:644px;width:1px;height:44px;background:#dadce0"></div>
<div class="r" style="left:1245px;top:644px;width:1px;height:44px;background:#dadce0"></div>
<div class="r" style="left:1341px;top:644px;width:1px;height:44px;background:#dadce0"></div>
<div class="r" style="left:1421px;top:644px;width:1px;height:44px;background:#dadce0"></div>
<div class="r" style="left:1501px;top:644px;width:1px;height:44px;background:#dadce0"></div>
<div class="r" style="left:20px;top:689px;width:1524px;height:40px;background:#f8f9fa"></div>
<div class="t" style="left:124.30px;top:702.84px;font-size:12px;line-height:12px;color:#3c4043;font-weight:normal;">Total: All enabled campaigns in your current vi...</div>
<div class="t" style="right:1039.00px;top:703.04px;font-size:12px;line-height:12px;color:#3c4043;font-weight:normal;text-align:right;">398,004</div>
<div class="t" style="right:959.00px;top:703.04px;font-size:12px;line-height:12px;color:#3c4043;font-weight:normal;text-align:right;">$2.62</div>
<div class="t" style="right:879.00px;top:703.04px;font-size:12px;line-height:12px;color:#3c4043;font-weight:normal;text-align:right;">15,735</div>
<div class="t" style="right:791.00px;top:703.04px;font-size:12px;line-height:12px;color:#3c4043;font-weight:normal;text-align:right;">$42,762.16</div>
<div class="t" style="right:711.00px;top:703.04px;font-size:12px;line-height:12px;color:#3c4043;font-weight:normal;text-align:right;text-decoration:underline dashed #e2e4e7;text-underline-offset:2px;text-decoration-thickness:1px">9,877.00</div>
<div class="t" style="right:631.00px;top:703.04px;font-size:12px;line-height:12px;color:#3c4043;font-weight:normal;text-align:right;text-decoration:underline dashed #e2e4e7;text-underline-offset:2px;text-decoration-thickness:1px">$4.33</div>
<div class="t" style="right:551.00px;top:703.04px;font-size:12px;line-height:12px;color:#3c4043;font-weight:normal;text-align:right;text-decoration:underline dashed #e2e4e7;text-underline-offset:2px;text-decoration-thickness:1px">425,821.23</div>
<div class="t" style="right:471.00px;top:703.04px;font-size:12px;line-height:12px;color:#3c4043;font-weight:normal;text-align:right;text-decoration:underline dashed #e2e4e7;text-underline-offset:2px;text-decoration-thickness:1px">9.96</div>
<div class="t" style="right:391.00px;top:703.04px;font-size:12px;line-height:12px;color:#3c4043;font-weight:normal;text-align:right;">11,415.70</div>
<div class="t" style="right:311.00px;top:703.04px;font-size:12px;line-height:12px;color:#3c4043;font-weight:normal;text-align:right;">434,599.40</div>
<div class="t" style="right:215.00px;top:703.04px;font-size:12px;line-height:12px;color:#3c4043;font-weight:normal;text-align:right;">0.00</div>
<div class="t" style="right:135.00px;top:703.04px;font-size:12px;line-height:12px;color:#3c4043;font-weight:normal;text-align:right;">0.00</div>
<div class="t" style="right:55.00px;top:703.04px;font-size:12px;line-height:12px;color:#3c4043;font-weight:normal;text-align:right;">0.00</div>
<div class="t" style="left:1536.6px;top:703.04px;font-size:12px;line-height:12px;color:#3c4043">$2.5</div>
<div class="r" style="left:20px;top:729px;width:1524px;height:1px;background:#dadce0"></div>
<div class="r" style="left:517px;top:689px;width:1px;height:40px;background:#dadce0"></div>
<div class="r" style="left:597px;top:689px;width:1px;height:40px;background:#dadce0"></div>
<div class="r" style="left:677px;top:689px;width:1px;height:40px;background:#dadce0"></div>
<div class="r" style="left:765px;top:689px;width:1px;height:40px;background:#dadce0"></div>
<div class="r" style="left:845px;top:689px;width:1px;height:40px;background:#dadce0"></div>
<div class="r" style="left:925px;top:689px;width:1px;height:40px;background:#dadce0"></div>
<div class="r" style="left:1005px;top:689px;width:1px;height:40px;background:#dadce0"></div>
<div class="r" style="left:1085px;top:689px;width:1px;height:40px;background:#dadce0"></div>
<div class="r" style="left:1165px;top:689px;width:1px;height:40px;background:#dadce0"></div>
<div class="r" style="left:1245px;top:689px;width:1px;height:40px;background:#dadce0"></div>
<div class="r" style="left:1341px;top:689px;width:1px;height:40px;background:#dadce0"></div>
<div class="r" style="left:1421px;top:689px;width:1px;height:40px;background:#dadce0"></div>
<div class="r" style="left:1501px;top:689px;width:1px;height:40px;background:#dadce0"></div>
<div class="r" style="left:20px;top:730px;width:1524px;height:40px;background:#f8f9fa"></div>
<div class="t" style="left:124.30px;top:743.84px;font-size:12px;line-height:12px;color:#3c4043;font-weight:normal;letter-spacing:0.13px">Total: Account</div>
<svg class="r" style="left:79.3px;top:744px" width="18" height="12" viewBox="0 0 18 12"><path d="M2 2L9 9L16 2" fill="none" stroke="#5f6368" stroke-width="2"/></svg>
<div class="t" style="right:1039.00px;top:744.04px;font-size:12px;line-height:12px;color:#3c4043;font-weight:normal;text-align:right;">398,004</div>
<div class="t" style="right:959.00px;top:744.04px;font-size:12px;line-height:12px;color:#3c4043;font-weight:normal;text-align:right;">$2.62</div>
<div class="t" style="right:879.00px;top:744.04px;font-size:12px;line-height:12px;color:#3c4043;font-weight:normal;text-align:right;">15,735</div>
<div class="t" style="right:791.00px;top:744.04px;font-size:12px;line-height:12px;color:#3c4043;font-weight:normal;text-align:right;">$42,762.16</div>
<div class="t" style="right:711.00px;top:744.04px;font-size:12px;line-height:12px;color:#3c4043;font-weight:normal;text-align:right;text-decoration:underline dashed #e2e4e7;text-underline-offset:2px;text-decoration-thickness:1px">9,877.00</div>
<div class="t" style="right:631.00px;top:744.04px;font-size:12px;line-height:12px;color:#3c4043;font-weight:normal;text-align:right;text-decoration:underline dashed #e2e4e7;text-underline-offset:2px;text-decoration-thickness:1px">$4.33</div>
<div class="t" style="right:551.00px;top:744.04px;font-size:12px;line-height:12px;color:#3c4043;font-weight:normal;text-align:right;text-decoration:underline dashed #e2e4e7;text-underline-offset:2px;text-decoration-thickness:1px">425,821.23</div>
<div class="t" style="right:471.00px;top:744.04px;font-size:12px;line-height:12px;color:#3c4043;font-weight:normal;text-align:right;text-decoration:underline dashed #e2e4e7;text-underline-offset:2px;text-decoration-thickness:1px">9.96</div>
<div class="t" style="right:391.00px;top:744.04px;font-size:12px;line-height:12px;color:#3c4043;font-weight:normal;text-align:right;">11,415.70</div>
<div class="t" style="right:311.00px;top:744.04px;font-size:12px;line-height:12px;color:#3c4043;font-weight:normal;text-align:right;">434,599.40</div>
<div class="t" style="right:215.00px;top:744.04px;font-size:12px;line-height:12px;color:#3c4043;font-weight:normal;text-align:right;">0.00</div>
<div class="t" style="right:135.00px;top:744.04px;font-size:12px;line-height:12px;color:#3c4043;font-weight:normal;text-align:right;">0.00</div>
<div class="t" style="right:55.00px;top:744.04px;font-size:12px;line-height:12px;color:#3c4043;font-weight:normal;text-align:right;">0.00</div>
<div class="t" style="left:1536.6px;top:744.04px;font-size:12px;line-height:12px;color:#3c4043">$2.5</div>
<div class="r" style="left:517px;top:730px;width:1px;height:40px;background:#dadce0"></div>
<div class="r" style="left:597px;top:730px;width:1px;height:40px;background:#dadce0"></div>
<div class="r" style="left:677px;top:730px;width:1px;height:40px;background:#dadce0"></div>
<div class="r" style="left:765px;top:730px;width:1px;height:40px;background:#dadce0"></div>
<div class="r" style="left:845px;top:730px;width:1px;height:40px;background:#dadce0"></div>
<div class="r" style="left:925px;top:730px;width:1px;height:40px;background:#dadce0"></div>
<div class="r" style="left:1005px;top:730px;width:1px;height:40px;background:#dadce0"></div>
<div class="r" style="left:1085px;top:730px;width:1px;height:40px;background:#dadce0"></div>
<div class="r" style="left:1165px;top:730px;width:1px;height:40px;background:#dadce0"></div>
<div class="r" style="left:1245px;top:730px;width:1px;height:40px;background:#dadce0"></div>
<div class="r" style="left:1341px;top:730px;width:1px;height:40px;background:#dadce0"></div>
<div class="r" style="left:1421px;top:730px;width:1px;height:40px;background:#dadce0"></div>
<div class="r" style="left:1501px;top:730px;width:1px;height:40px;background:#dadce0"></div>
<svg class="r" style="left:386px;top:701px" width="14" height="14" viewBox="0 0 14 14"><circle cx="7" cy="6.85" r="6.2" fill="none" stroke="#5f6368" stroke-width="1.4"/><path d="M4.7 5.3C4.7 4 5.7 3.2 7 3.2C8.4 3.2 9.3 4.1 9.3 5.2C9.3 6.6 7.1 6.9 7.1 8.9" fill="none" stroke="#5f6368" stroke-width="1.3"/><circle cx="7.1" cy="10.5" r="0.8" fill="#5f6368"/></svg>
<svg class="r" style="left:210px;top:742px" width="14" height="14" viewBox="0 0 14 14"><circle cx="7" cy="6.85" r="6.2" fill="none" stroke="#5f6368" stroke-width="1.4"/><path d="M4.7 5.3C4.7 4 5.7 3.2 7 3.2C8.4 3.2 9.3 4.1 9.3 5.2C9.3 6.6 7.1 6.9 7.1 8.9" fill="none" stroke="#5f6368" stroke-width="1.3"/><circle cx="7.1" cy="10.5" r="0.8" fill="#5f6368"/></svg>
<div class="r" style="left:440px;top:252px;width:1px;height:518px;background:#dadce0"></div>
<div class="r" style="left:441px;top:252px;width:4px;height:518px;background:linear-gradient(to right, rgba(0,0,0,.08), rgba(0,0,0,0))"></div>
<div class="r" style="left:1544px;top:0px;width:4px;height:770px;background:#f1f3f4"></div>
<div class="r" style="left:1544px;top:0px;width:4px;height:668px;background:#b1b2b4"></div>
</body></html>
